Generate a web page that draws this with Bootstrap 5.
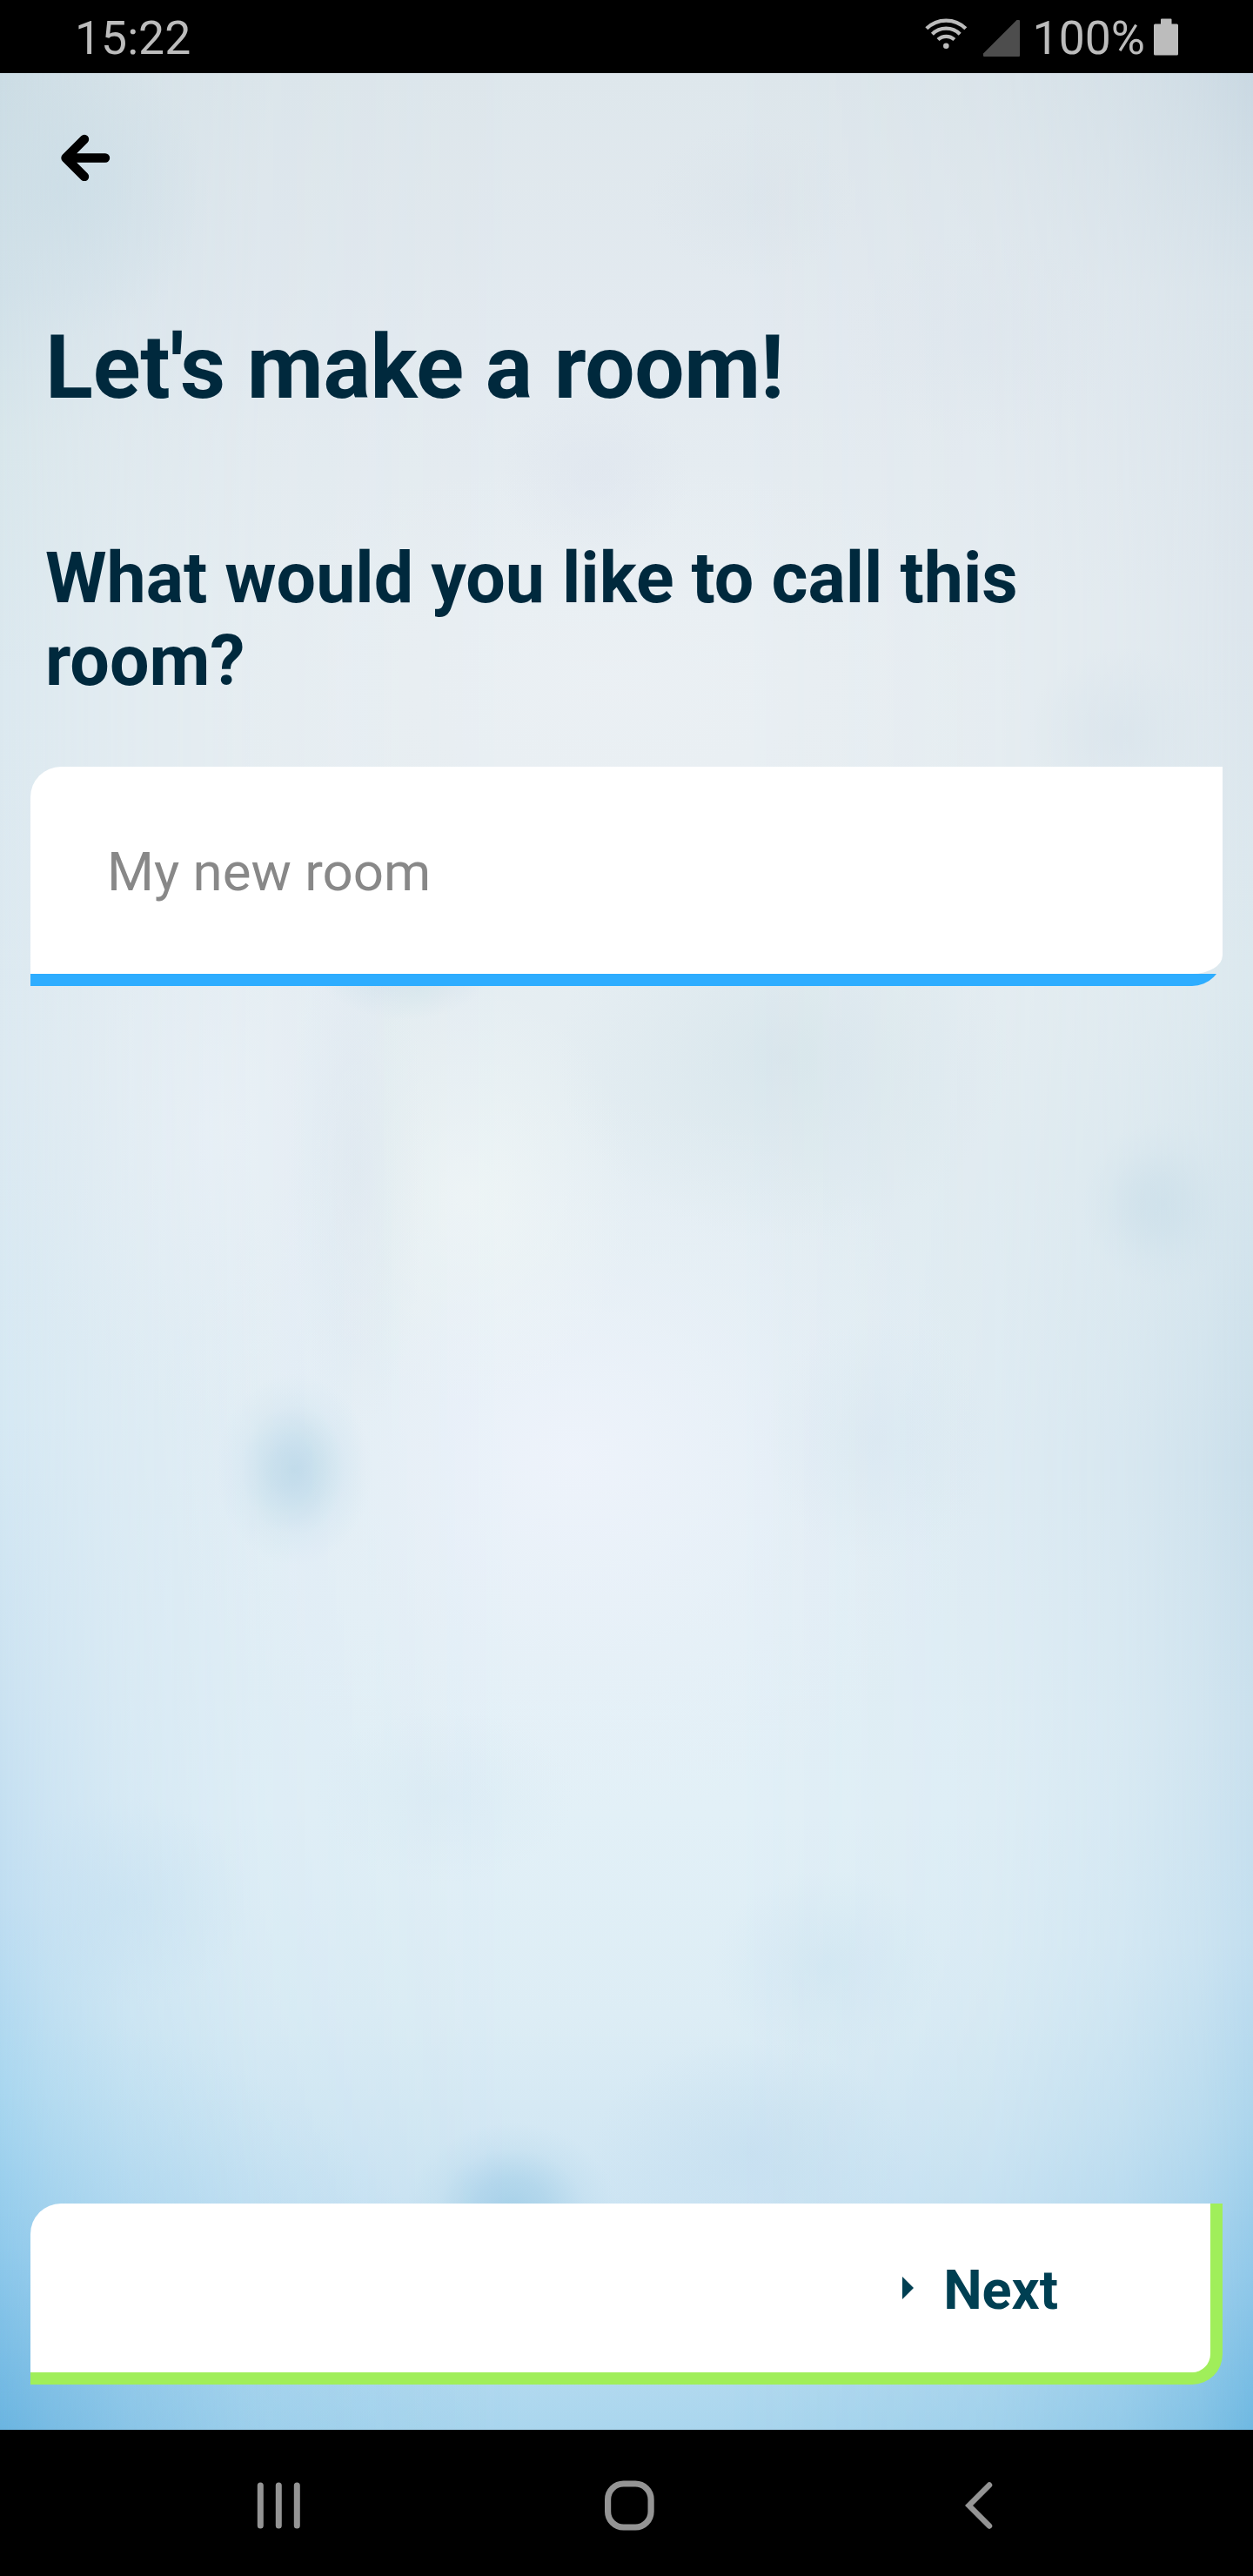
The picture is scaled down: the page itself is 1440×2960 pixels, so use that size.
<!DOCTYPE html>
<html lang="en">
<head>
<meta charset="utf-8">
<meta name="viewport" content="width=device-width, initial-scale=1">
<title>Let's make a room!</title>
<link href="https://cdn.jsdelivr.net/npm/bootstrap@5.3.0/dist/css/bootstrap.min.css" rel="stylesheet">
<style>
  body { font-family: Roboto, "Liberation Sans", sans-serif; height: 2960px; background: #000; overflow: hidden; }
  svg { display: block; }
  .status-bar { height: 84px; padding: 0 84px 0 86px; color: #bcbcbc; font-size: 53.5px; line-height: 84px; }
  .status-bar .clock, .status-bar .percent { padding-top: 2px; }
  .screen {
    isolation: isolate;
    padding: 0 35px 52px;
    background:
      radial-gradient(circle 170px at 70px 136px, rgba(190,215,228,.55), rgba(190,215,228,.25) 50%, rgba(190,215,228,0)),
      radial-gradient(ellipse 110px 100px at 684px 462px, rgba(218,225,237,.4), rgba(218,225,237,0)),
      radial-gradient(ellipse 120px 90px at 865px 146px, rgba(214,224,232,.3), rgba(214,224,232,0)),
      radial-gradient(ellipse 160px 120px at 1130px 300px, rgba(218,227,236,.3), rgba(218,227,236,0)),
      radial-gradient(ellipse 110px 100px at 1290px 760px, rgba(202,218,230,.4), rgba(202,218,230,0)),
      radial-gradient(ellipse 100px 60px at 465px 1028px, rgba(190,216,229,.5), rgba(190,216,229,0)),
      radial-gradient(ellipse 260px 210px at 900px 1130px, rgba(208,225,232,.55), rgba(208,225,232,.2) 60%, rgba(208,225,232,0)),
      radial-gradient(circle 95px at 1338px 1300px, rgba(190,215,229,.65), rgba(190,215,229,.5) 30%, rgba(190,215,229,.15) 70%, rgba(190,215,229,0)),
      radial-gradient(ellipse 90px 110px at 338px 1605px, rgba(182,213,230,.8), rgba(184,215,231,.62) 28%, rgba(188,217,232,.18) 68%, rgba(190,217,232,0)),
      radial-gradient(ellipse 130px 140px at 1010px 1570px, rgba(209,227,238,.35), rgba(209,227,238,0)),
      radial-gradient(ellipse 80px 300px at 410px 1260px, rgba(218,229,237,.5), rgba(218,229,237,0)),
      radial-gradient(ellipse 150px 100px at 510px 1980px, rgba(205,226,239,.25), rgba(205,226,239,0)),
      radial-gradient(ellipse 150px 120px at 140px 2100px, rgba(175,213,235,.25), rgba(175,213,235,0)),
      radial-gradient(ellipse 130px 110px at 950px 2175px, rgba(195,222,239,.35), rgba(195,222,239,0)),
      radial-gradient(ellipse 180px 130px at 860px 2390px, rgba(188,217,237,.4), rgba(188,217,237,0)),
      radial-gradient(ellipse 120px 100px at 588px 2455px, rgba(158,204,230,.8), rgba(158,204,230,.55) 35%, rgba(158,204,230,.15) 70%, rgba(158,204,230,0)),
      radial-gradient(ellipse 190px 240px at 540px 1290px, rgba(240,246,246,.8), rgba(240,246,246,0)),
      radial-gradient(ellipse 250px 330px at 250px 1220px, rgba(236,242,248,.85), rgba(236,242,248,0)),
      radial-gradient(ellipse 480px 420px at 660px 1590px, rgba(238,243,251,.95), rgba(236,242,249,.4) 55%, rgba(236,242,249,0)),
      radial-gradient(ellipse 500px 260px at 700px 700px, rgba(237,241,245,.6), rgba(237,241,245,0)),
      radial-gradient(ellipse 560px 480px at 0 100%, rgba(130,193,231,.5), rgba(150,205,236,.25) 50%, rgba(170,214,239,0)),
      linear-gradient(#dee7ec, #e3eaf0 300px, #e7eef2 620px, #e7eef2 900px, #e3edf2 1250px, #e2eef5 1600px, #e2f0f7 2000px, #ddedf5 2230px, #cee5f3 2440px, #aad6ee 2708px);
  }
  .screen::before, .screen::after { content: ""; position: absolute; top: 0; bottom: 0; width: 600px; z-index: -1; }
  .screen::before {
    left: 0;
    background: linear-gradient(#cbdce4, #d0e0e8 250px, #d8e6eb 420px, #dbe8ef 700px, #dce9f1 1150px, #d5e8f3 1550px, #cbe2f1 1850px, #bfddf1 2100px, #a8d6ef 2320px, #8fc9eb 2500px, #6ab4e0);
    -webkit-mask-image: linear-gradient(90deg, #000, rgba(0,0,0,.68) 10%, rgba(0,0,0,.38) 25%, rgba(0,0,0,.13) 50%, transparent);
    mask-image: linear-gradient(90deg, #000, rgba(0,0,0,.68) 10%, rgba(0,0,0,.38) 25%, rgba(0,0,0,.13) 50%, transparent);
  }
  .screen::after {
    right: 0;
    background: linear-gradient(#c9d8e2, #d8e3ea 250px, #dce5ec 600px, #dbe8ee 1050px, #d2e3ec 1350px, #c9deea 1600px, #cae0ed 1900px, #c2deef 2150px, #acd5ec 2350px, #90c8e9 2530px, #6eb8e1);
    -webkit-mask-image: linear-gradient(270deg, #000, rgba(0,0,0,.68) 10%, rgba(0,0,0,.4) 25%, rgba(0,0,0,.16) 50%, transparent);
    mask-image: linear-gradient(270deg, #000, rgba(0,0,0,.68) 10%, rgba(0,0,0,.4) 25%, rgba(0,0,0,.16) 50%, transparent);
  }
  .back-btn { width: 57px; margin: 70px 0 0 35px; }
  .page-title { margin: 155px 17px 0; font-size: 101.5px; line-height: 119px; letter-spacing: -.28px; color: #00293d; }
  .question { margin: 135px 17px 0; font-size: 80.7px; line-height: 95px; color: #00293d; }
  .name-field { margin-top: 74px; border-radius: 0 0 35px 0; }
  .name-field .form-control {
    height: 238px; padding: 4px 87px 0 88px; border-radius: 35px 0 35px 0 / 35px 0 21px 0;
    font-size: 61.8px; line-height: 74px; color: #00293d;
  }
  .name-field .form-control::placeholder { color: #888; opacity: 1; }
  .name-field .accent-line { height: 14px; background: #2eadff; }
  .next-btn {
    height: 208px; padding: 0 175px 0 0; background: #fff; color: #003f52;
    border: solid #a0ee5a; border-width: 0 14px 14px 0; border-radius: 35px 0 35px 0;
    font-size: 63px; line-height: 74px; font-weight: 700;
  }
  .next-label { margin-left: 34px; padding-top: 5px; }
  .nav-keys { height: 168px; padding: 5px 299px 0 295px; }
  .home-key { margin-right: 9px; }
</style>
</head>
<body class="d-flex flex-column">
  <header class="status-bar d-flex justify-content-between flex-shrink-0">
    <span class="clock">15:22</span>
    <div class="d-flex">
      <svg width="120" height="84" viewBox="1062 0 120 84" fill="none" stroke="#bcbcbc" stroke-width="4.2" aria-hidden="true">
        <path d="M1063.8 32.8a32 32 0 0 1 45 0M1070.4 39.3a22.5 22.5 0 0 1 31.8 0M1077 45.600a13.500 13.500 0 0 1 18.800 0"/>
        <circle cx="1086.300" cy="52.700" r="3.300" fill="#bcbcbc" stroke="none"/>
        <path d="M1167.500 23H1170a1 1 0 0 1 1 1V64a1 1 0 0 1-1 1H1130a1 1 0 0 1-1-1V61.500Z" fill="#4d4d4d" stroke="none"/>
      </svg>
      <span class="percent ms-1">100%</span>
      <svg class="ms-2" width="32" height="84" viewBox="1324 0 32 84" fill="#bcbcbc" aria-hidden="true">
        <path d="M1335 21.500h10.500a1 1 0 0 1 1 1V27.500h6a1.500 1.500 0 0 1 1.500 1.500V62a1.500 1.500 0 0 1-1.500 1.500H1327.500a1.500 1.500 0 0 1-1.500-1.500V29a1.500 1.500 0 0 1 1.500-1.500H1334V22.500a1 1 0 0 1 1-1Z"/>
      </svg>
    </div>
  </header>

  <main class="screen position-relative flex-grow-1 d-flex flex-column">
    <a href="#" class="back-btn" aria-label="Back">
      <svg width="57" height="54" viewBox="0 0 57 54" fill="none" stroke="#000" stroke-width="10.400" stroke-linecap="round" stroke-linejoin="round">
        <path d="M27 6 5.500 27.500 27 49M7 27.500H51"/>
      </svg>
    </a>
    <h1 class="page-title fw-bold">Let's make a room!</h1>
    <h2 class="question fw-bold">What would you like to call this room?</h2>
    <div class="name-field overflow-hidden">
      <input type="text" class="form-control border-0 bg-white shadow-none" placeholder="My new room" aria-label="Room name">
      <div class="accent-line"></div>
    </div>
    <button type="button" class="next-btn mt-auto w-100 d-flex align-items-center justify-content-end">
      <svg width="13" height="26" viewBox="0 0 13 26" fill="#003f52" aria-hidden="true"><path d="M0 0 13 13 0 26Z"/></svg>
      <span class="next-label">Next</span>
    </button>
  </main>

  <nav class="nav-keys d-flex justify-content-between align-items-center flex-shrink-0" aria-label="System">
    <svg width="51" height="54" viewBox="0 0 51 54" stroke="#949494" stroke-width="7" stroke-linecap="round" aria-hidden="true"><path d="M4.300 4V50M25.300 4V50M46.300 4V50"/></svg>
    <svg class="home-key" width="57" height="58" viewBox="0 0 57 58" fill="none" stroke="#949494" stroke-width="7.200" aria-hidden="true"><rect x="3.600" y="4" width="49.500" height="50" rx="18"/></svg>
    <svg width="32" height="54" viewBox="0 0 32 54" fill="none" stroke="#949494" stroke-width="6.500" stroke-linecap="round" aria-hidden="true"><path d="M28 3.500 4.500 27 28 50.500"/></svg>
  </nav>
<script src="https://cdn.jsdelivr.net/npm/bootstrap@5.3.0/dist/js/bootstrap.bundle.min.js"></script>
</body>
</html>
